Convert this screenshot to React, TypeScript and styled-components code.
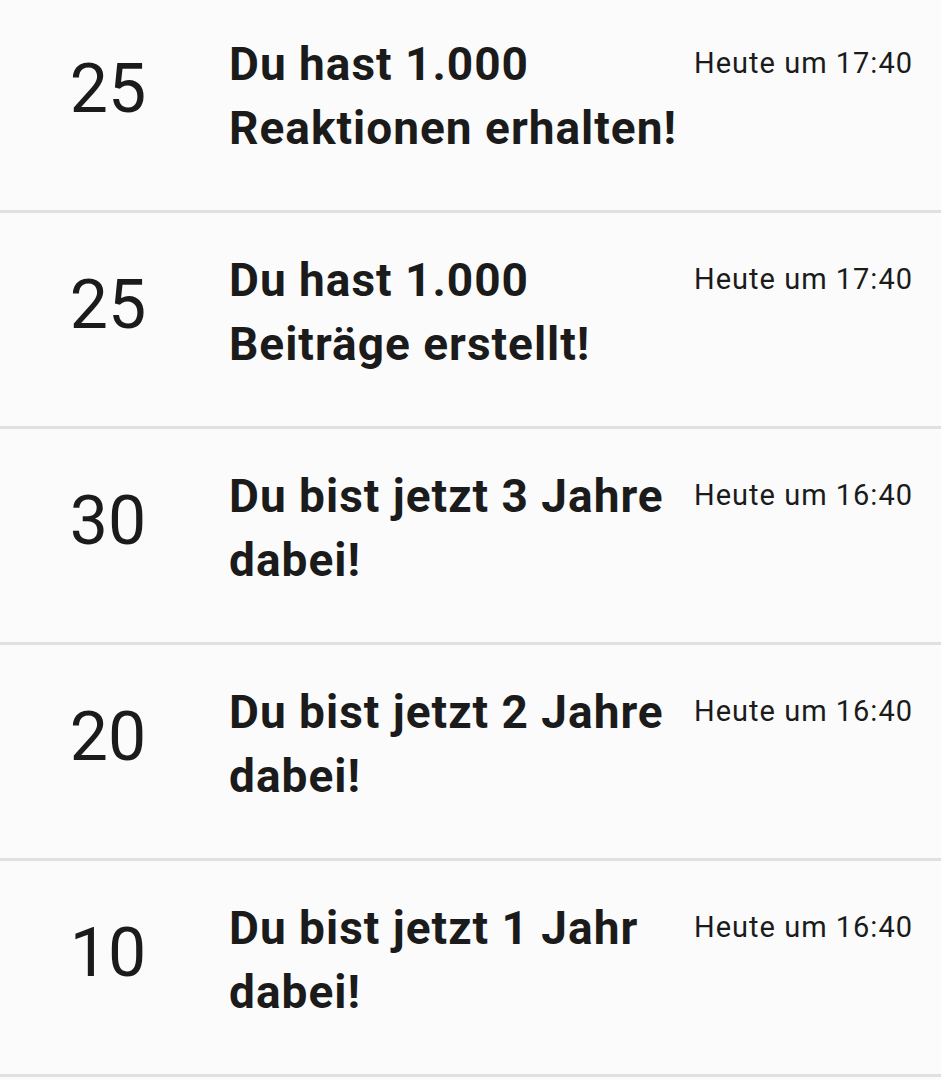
import React from 'react';
import styled, { createGlobalStyle } from 'styled-components';

const GlobalStyle = createGlobalStyle`
    html, body {
        margin: 0;
        padding: 0;
        background: #fbfbfb;
        font-family: Roboto, "Liberation Sans", Arial, sans-serif;
        color: #1b1b1b;
        overflow: hidden;
    }
`;

const List = styled.ul`
    list-style: none;
    margin: -3px 0 0;
    padding: 0;
`;

const Row = styled.li`
    display: flex;
    align-items: flex-start;
    height: 213px;
    border-bottom: 3px solid #e1e1e1;
    box-sizing: content-box;
`;

const Count = styled.div`
    width: 216px;
    flex-shrink: 0;
    margin-top: 58px;

    font-size: 68px;
    line-height: 68px;
    text-align: center;
    font-weight: 400;
`;

const Title = styled.h2`
    flex: 1;
    min-width: 0;
    margin: 35px 0 0 13px;

    font-size: 46px;
    line-height: 64px;
    letter-spacing: 1px;
    font-weight: 700;
`;

const Time = styled.span`
    flex-shrink: 0;
    margin: 49px 28px 0 14px;

    font-size: 29px;
    line-height: 34px;
    letter-spacing: 1px;
    white-space: nowrap;
`;

interface Item {
    count: number;
    title: string;
    time: string;
}

const items: Item[] = [
    { count: 25, title: 'Du hast 1.000 Reaktionen erhalten!', time: 'Heute um 17:40' },
    { count: 25, title: 'Du hast 1.000 Beiträge erstellt!', time: 'Heute um 17:40' },
    { count: 30, title: 'Du bist jetzt 3 Jahre dabei!', time: 'Heute um 16:40' },
    { count: 20, title: 'Du bist jetzt 2 Jahre dabei!', time: 'Heute um 16:40' },
    { count: 10, title: 'Du bist jetzt 1 Jahr dabei!', time: 'Heute um 16:40' },
];

function App() {
    return (
        <>
            <GlobalStyle />
            <List>
                {items.map((item, index) => (
                    <Row key={index}>
                        <Count>{item.count}</Count>
                        <Title>{item.title}</Title>
                        <Time>{item.time}</Time>
                    </Row>
                ))}
            </List>
        </>
    );
}
export default App;
